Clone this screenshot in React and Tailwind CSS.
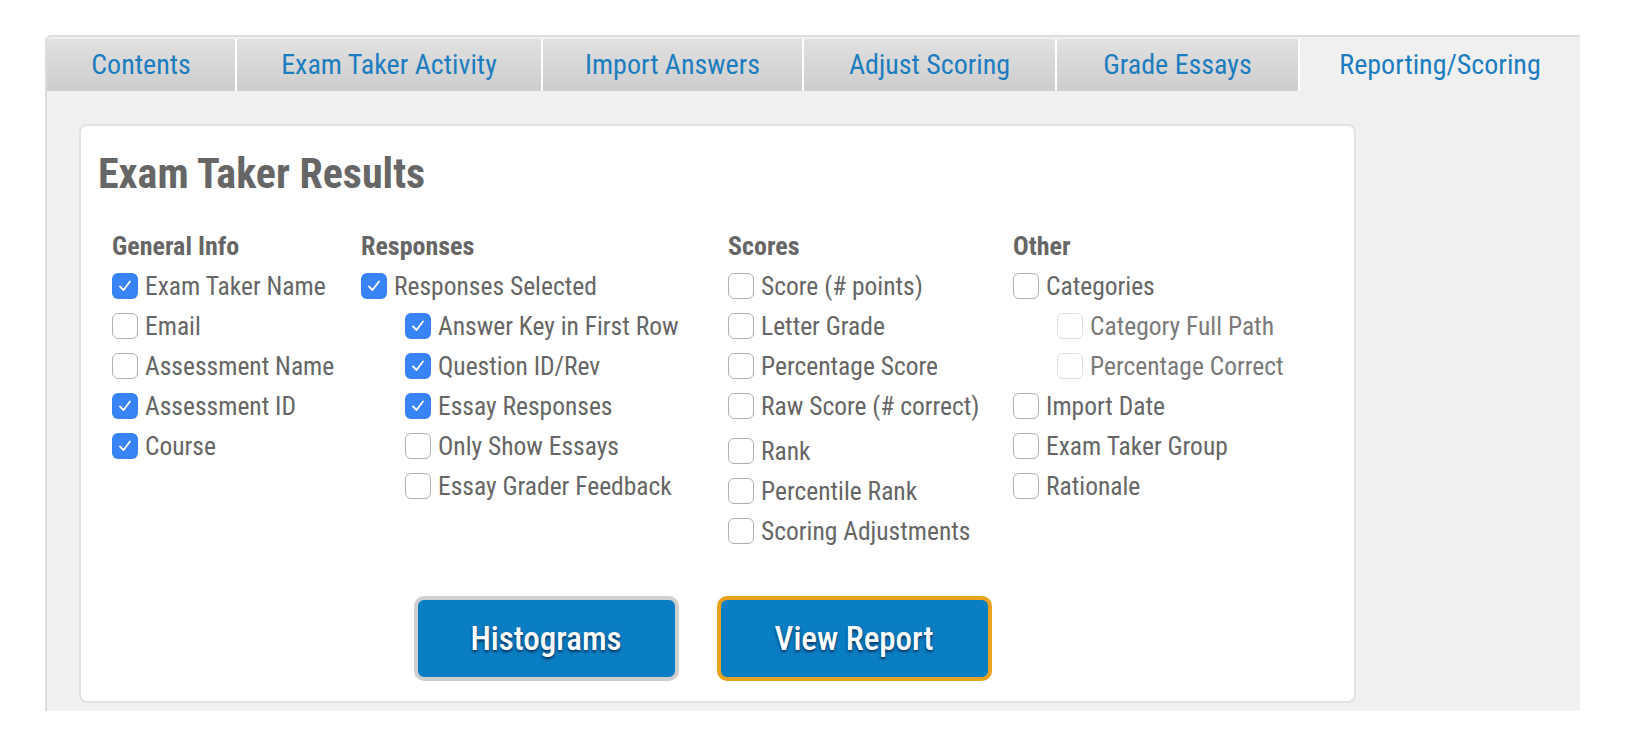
import React, { useState } from "react";

const tabs = [
  { label: "Contents", w: "w-[190px]" },
  { label: "Exam Taker Activity", w: "w-[306px]" },
  { label: "Import Answers", w: "w-[261px]" },
  { label: "Adjust Scoring", w: "w-[253px]" },
  { label: "Grade Essays", w: "w-[243px]" },
  { label: "Reporting/Scoring", w: "w-[280px]", active: true },
];

const columns = [
  {
    title: "General Info",
    w: "w-[249px]",
    items: [
      { id: "name", label: "Exam Taker Name", on: true },
      { id: "email", label: "Email" },
      { id: "aname", label: "Assessment Name" },
      { id: "aid", label: "Assessment ID", on: true },
      { id: "course", label: "Course", on: true },
    ],
  },
  {
    title: "Responses",
    w: "w-[367px]",
    items: [
      { id: "resp", label: "Responses Selected", on: true },
      { id: "key", label: "Answer Key in First Row", on: true, sub: true },
      { id: "qid", label: "Question ID/Rev", on: true, sub: true },
      { id: "essay", label: "Essay Responses", on: true, sub: true },
      { id: "only", label: "Only Show Essays", sub: true },
      { id: "feedback", label: "Essay Grader Feedback", sub: true },
    ],
  },
  {
    title: "Scores",
    w: "w-[285px]",
    items: [
      { id: "score", label: "Score (# points)" },
      { id: "letter", label: "Letter Grade" },
      { id: "pct", label: "Percentage Score" },
      { id: "raw", label: "Raw Score (# correct)" },
      { id: "rank", label: "Rank", gap: true },
      { id: "prank", label: "Percentile Rank" },
      { id: "adj", label: "Scoring Adjustments" },
    ],
  },
  {
    title: "Other",
    w: "flex-1",
    items: [
      { id: "cat", label: "Categories" },
      { id: "catpath", label: "Category Full Path", sub: true, disabled: true },
      { id: "catpct", label: "Percentage Correct", sub: true, disabled: true },
      { id: "idate", label: "Import Date" },
      { id: "group", label: "Exam Taker Group" },
      { id: "rat", label: "Rationale" },
    ],
  },
];

function Box({ on, disabled }) {
  if (on) {
    return (
      <span className="w-[26px] h-[26px] rounded-[6px] bg-[#3884f6] flex items-center justify-center shrink-0">
        <svg width="18" height="18" viewBox="0 0 18 18" fill="none">
          <path d="M4 9.5 L7.5 13 L14 4.5" stroke="white" strokeWidth="1.8" strokeLinecap="round" strokeLinejoin="round" />
        </svg>
      </span>
    );
  }
  return (
    <span
      className={
        disabled
          ? "w-[26px] h-[26px] rounded-[6px] bg-white border-[1.5px] border-[#e0e0e0] shrink-0"
          : "w-[26px] h-[26px] rounded-[6px] bg-white border-[1.5px] border-[#b0b0b0] shrink-0"
      }
    />
  );
}

export default function App() {
  const [checked, setChecked] = useState(() => {
    const s = {};
    columns.forEach((c) => c.items.forEach((i) => (s[i.id] = !!i.on)));
    return s;
  });

  const toggle = (item) => {
    if (item.disabled) return;
    setChecked((prev) => ({ ...prev, [item.id]: !prev[item.id] }));
  };

  return (
    <div className="w-full h-[742px] bg-white pt-[35px] pl-[45px] font-['Roboto',sans-serif] font-stretch-condensed">
      <div className="w-[1535px] bg-[#f0f0f0] border-t-2 border-l-2 border-[#dcdcdc] rounded-tl-[6px] pt-[2px]">
        {/* Tab strip */}
        <div className="flex h-[52px]">
          {tabs.map((t, i) => (
            <div
              key={t.label}
              className={
                t.active
                  ? `${t.w} h-full bg-[#f0f0f0] text-center text-[28px] leading-[52px] text-[#1b7dc0]`
                  : `${t.w} h-full bg-linear-to-b from-[#e1e1e1] to-[#cdcdcd] border-r-2 border-white text-center text-[28px] leading-[52px] text-[#1b7dc0] ${i === 0 ? "rounded-tl-[4px]" : ""}`
              }
            >
              {t.label}
            </div>
          ))}
        </div>

        {/* Panel body */}
        <div className="pl-[32px] pt-[33px] pb-[8px]">
          <div className="w-[1277px] bg-white border-2 border-[#e2e2e2] rounded-[8px] pt-[24px] pb-[20px]">
            <h2 className="pl-[17px] text-[42px] leading-[48px] font-bold text-[#666666]">
              Exam Taker Results
            </h2>

            <div className="flex pl-[31px] mt-[33px]">
              {columns.map((col) => (
                <div key={col.title} className={col.w}>
                  <div className="text-[26px] leading-[30px] font-bold text-[#666666] mb-[5px]">
                    {col.title}
                  </div>
                  {col.items.map((item) => (
                    <div
                      key={item.id}
                      onClick={() => toggle(item)}
                      className={`flex items-center h-[40px] gap-[7px] cursor-pointer ${item.sub ? "pl-[44px]" : ""} ${item.gap ? "mt-[5px]" : ""}`}
                    >
                      <Box on={checked[item.id]} disabled={item.disabled} />
                      <span
                        className={`text-[25.5px] leading-[40px] whitespace-nowrap ${item.disabled ? "text-[#7a7a7a]" : "text-[#666666]"}`}
                      >
                        {item.label}
                      </span>
                    </div>
                  ))}
                </div>
              ))}
            </div>

            <div className="flex justify-center gap-[38px] pr-[30px] mt-[45px]">
              <button className="w-[265px] h-[85px] rounded-[10px] border-4 border-[#cfcfcf] bg-[#0a7ec3] text-white text-[33px] font-medium [text-shadow:0_2px_3px_rgba(0,30,70,0.85)]">
                Histograms
              </button>
              <button className="w-[275px] h-[85px] rounded-[10px] border-4 border-[#e8a21e] bg-[#0a7ec3] text-white text-[33px] font-medium [text-shadow:0_2px_3px_rgba(0,30,70,0.85)]">
                View Report
              </button>
            </div>
          </div>
        </div>
      </div>
    </div>
  );
}
